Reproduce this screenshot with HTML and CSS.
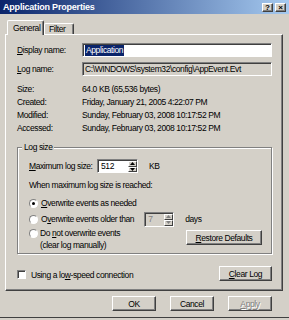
FILE: index.html
```html
<!DOCTYPE html>
<html lang="en">
<head>
  <meta charset="UTF-8">
  <meta name="viewport" content="width=device-width, initial-scale=1.0">
  <title>Application Properties</title>
  <link rel="stylesheet" href="styles.css">
</head>
<body>
  <div class="window">
    <div class="titlebar">
      <span class="title">Application Properties</span>
      <div class="caption-buttons">
        <span class="caption-btn">?</span>
        <span class="caption-btn">&times;</span>
      </div>
    </div>

    <div class="tabs">
      <div class="tab active">General</div>
      <div class="tab">Filter</div>
    </div>

    <div class="panel">
      <div class="field-row first">
        <span class="label"><u>D</u>isplay name:</span>
        <div class="textbox"><span class="selected">Application</span></div>
      </div>
      <div class="field-row">
        <span class="label"><u>L</u>og name:</span>
        <div class="textbox readonly">C:\WINDOWS\system32\config\AppEvent.Evt</div>
      </div>

      <div class="info">
        <span>Size:</span><span>64.0 KB (65,536 bytes)</span>
        <span>Created:</span><span>Friday, January 21, 2005 4:22:07 PM</span>
        <span>Modified:</span><span>Sunday, February 03, 2008 10:17:52 PM</span>
        <span>Accessed:</span><span>Sunday, February 03, 2008 10:17:52 PM</span>
      </div>

      <div class="group">
        <span class="legend">Log size</span>
        <div class="max-row">
          <span class="max-label"><u>M</u>aximum log size:</span>
          <div class="spin">
            <span class="spin-value">512</span>
            <span class="spin-arrows">
              <span class="arrow"><svg width="5" height="3" viewBox="0 0 5 3"><path d="M2.5 0L5 3H0z"/></svg></span>
              <span class="arrow"><svg width="5" height="3" viewBox="0 0 5 3"><path d="M0 0H5L2.5 3z"/></svg></span>
            </span>
          </div>
          <span class="unit">KB</span>
        </div>
        <div class="when">When maximum log size is reached:</div>

        <div class="radio-row first">
          <span class="radio"><span class="dot"></span></span>
          <span><u>O</u>verwrite events as needed</span>
        </div>
        <div class="radio-row second">
          <span class="radio"></span>
          <span>O<u>v</u>erwrite events older than</span>
          <div class="spin small disabled">
            <span class="spin-value">7</span>
            <span class="spin-arrows">
              <span class="arrow"><svg width="5" height="3" viewBox="0 0 5 3"><path d="M2.5 0L5 3H0z"/></svg></span>
              <span class="arrow"><svg width="5" height="3" viewBox="0 0 5 3"><path d="M0 0H5L2.5 3z"/></svg></span>
            </span>
          </div>
          <span class="unit">days</span>
        </div>
        <div class="radio-row third">
          <span class="radio"></span>
          <span class="two-lines">Do <u>n</u>ot overwrite events<br>(clear log manually)</span>
          <button class="btn restore"><u>R</u>estore Defaults</button>
        </div>
      </div>

      <div class="bottom-row">
        <span class="check"><span class="checkbox"></span>Using a lo<u>w</u>-speed connection</span>
        <button class="btn clear"><u>C</u>lear Log</button>
      </div>
    </div>

    <div class="dialog-buttons">
      <button class="btn">OK</button>
      <button class="btn">Cancel</button>
      <button class="btn disabled"><u>A</u>pply</button>
    </div>
  </div>
</body>
</html>
```

FILE: styles.css
```css
body {
  margin: 0;
  padding: 0;
  background-color: #D4D0C8;
  font-family: "Liberation Sans", Arial, sans-serif;
  font-size: 8.5px;
  letter-spacing: -0.4px;
  color: #000000;
}

.window {
  width: 289px;
  height: 318px;
  box-sizing: border-box;
  border-bottom: 1px solid #404040;
  display: flex;
  flex-direction: column;
}

/* title bar */
.titlebar {
  height: 14px;
  background: linear-gradient(to right, #0A246A, #A6CAF0);
  display: flex;
  align-items: center;
  justify-content: space-between;
  padding: 0 3px 0 3px;
}
.title {
  color: #ffffff;
  font-weight: bold;
  font-size: 9px;
  letter-spacing: -0.2px;
  line-height: 14px;
}
.caption-buttons {
  display: flex;
  gap: 2px;
}
.caption-btn {
  width: 11px;
  height: 9px;
  box-sizing: border-box;
  background-color: #D4D0C8;
  border: 1px solid;
  border-color: #ffffff #404040 #404040 #ffffff;
  box-shadow: inset -1px -1px #808080;
  font-weight: bold;
  font-size: 8px;
  letter-spacing: 0;
  line-height: 7px;
  text-align: center;
}

/* tabs */
.tabs {
  position: relative;
  z-index: 1;
  display: flex;
  align-items: flex-end;
  height: 14px;
  margin-top: 6px;
  padding-left: 7px;
}
.tab {
  box-sizing: border-box;
  width: 30px;
  height: 11px;
  padding-left: 4px;
  line-height: 10px;
  background-color: #D4D0C8;
  border: 1px solid;
  border-color: #ffffff #404040 transparent #ffffff;
  border-bottom: none;
  border-radius: 2px 2px 0 0;
  box-shadow: inset -1px 0 #808080;
}
.tab.active {
  width: 37px;
  height: 15px;
  margin-bottom: -1px;
  padding-left: 5px;
  padding-top: 1px;
  line-height: 12px;
}

/* tab page */
.panel {
  width: 278px;
  margin-left: 5px;
  box-sizing: border-box;
  border: 1px solid;
  border-color: #ffffff #404040 #404040 #ffffff;
  box-shadow: inset -1px -1px #808080;
  padding: 0 10px 9px 11px;
}
.field-row {
  display: flex;
  align-items: center;
  margin-top: 5px;
}
.field-row.first {
  margin-top: 8px;
}
.label {
  width: 65px;
  flex: none;
}
.textbox {
  flex: 1;
  height: 14px;
  box-sizing: border-box;
  border: 1px solid;
  border-color: #808080 #ffffff #ffffff #808080;
  box-shadow: inset 1px 1px #404040;
  background-color: #ffffff;
  padding-left: 2px;
  line-height: 12px;
  white-space: nowrap;
  overflow: hidden;
}
.textbox.readonly {
  background-color: #D4D0C8;
}
.selected {
  display: inline-block;
  background-color: #0A246A;
  color: #ffffff;
  line-height: 11px;
  padding: 0 1px;
}
.info {
  display: grid;
  grid-template-columns: 65px 1fr;
  grid-auto-rows: 13px;
  line-height: 13px;
  margin-top: 7px;
}

/* group box */
.group {
  margin-top: 12px;
  border: 1px solid #808080;
  box-shadow: inset 1px 1px #ffffff, 1px 1px #ffffff;
  padding: 0 9px 2px 11px;
}
.legend {
  display: block;
  width: fit-content;
  margin: -7px 0 0 -7px;
  padding: 0 2px;
  background-color: #D4D0C8;
  line-height: 12px;
}
.max-row {
  display: flex;
  align-items: center;
  height: 14px;
  margin-top: 6px;
}
.max-label {
  width: 68px;
}
.spin {
  display: flex;
  width: 41px;
  height: 14px;
  box-sizing: border-box;
  border: 1px solid;
  border-color: #808080 #ffffff #ffffff #808080;
  box-shadow: inset 1px 1px #404040;
  background-color: #ffffff;
}
.spin.small {
  width: 30px;
  height: 15px;
  margin-left: 10px;
}
.spin.disabled {
  background-color: #D4D0C8;
  color: #808080;
}
.spin-value {
  flex: 1;
  padding-left: 3px;
  line-height: 12px;
}
.spin-arrows {
  display: flex;
  flex-direction: column;
  width: 9px;
  padding: 1px 0 0 0;
}
.arrow {
  flex: 1;
  display: flex;
  align-items: center;
  justify-content: center;
  box-sizing: border-box;
  background-color: #D4D0C8;
  border: 1px solid;
  border-color: #ffffff #404040 #404040 #ffffff;
}
.arrow svg {
  display: block;
  fill: #000000;
}
.spin.disabled .arrow svg {
  fill: #808080;
}
.unit {
  margin-left: 11px;
}
.when {
  margin-top: 6px;
  line-height: 12px;
}
.radio-row {
  display: flex;
  align-items: center;
}
.radio-row.first {
  height: 14px;
  margin-top: 5px;
}
.radio-row.second {
  height: 16px;
  margin-top: 1px;
}
.radio-row.third {
  align-items: flex-start;
  line-height: 12px;
}
.radio {
  flex: none;
  display: flex;
  align-items: center;
  justify-content: center;
  width: 9px;
  height: 9px;
  box-sizing: border-box;
  margin-right: 3px;
  border-radius: 50%;
  border: 1px solid;
  border-color: #808080 #ffffff #ffffff #808080;
  background-color: #ffffff;
}
.radio-row.third .radio {
  margin-top: 2px;
}
.dot {
  width: 3px;
  height: 3px;
  border-radius: 50%;
  background-color: #000000;
}
.two-lines {
  margin-left: -1px;
}

/* buttons */
.btn {
  height: 15px;
  box-sizing: border-box;
  padding: 0;
  background-color: #D4D0C8;
  border: 1px solid;
  border-color: #ffffff #404040 #404040 #ffffff;
  box-shadow: inset -1px -1px #808080;
  font-family: inherit;
  font-size: 8.5px;
  letter-spacing: -0.4px;
  line-height: 12px;
  color: #000000;
  text-align: center;
}
.btn.restore {
  width: 76px;
  margin: 3px 0 0 auto;
}
.btn.clear {
  width: 53px;
}
.btn.disabled {
  color: #808080;
  text-shadow: 1px 1px #ffffff;
}

.bottom-row {
  display: flex;
  align-items: center;
  justify-content: space-between;
  height: 15px;
  margin-top: 12px;
}
.check {
  display: flex;
  align-items: center;
  margin-top: 2px;
}
.checkbox {
  width: 9px;
  height: 9px;
  box-sizing: border-box;
  margin-right: 5px;
  border: 1px solid;
  border-color: #808080 #ffffff #ffffff #808080;
  box-shadow: inset 1px 1px #404040;
  background-color: #ffffff;
}

.dialog-buttons {
  display: flex;
  justify-content: flex-end;
  gap: 14px;
  margin-top: 5px;
  padding-right: 17px;
}
.dialog-buttons .btn {
  width: 44px;
}
```
